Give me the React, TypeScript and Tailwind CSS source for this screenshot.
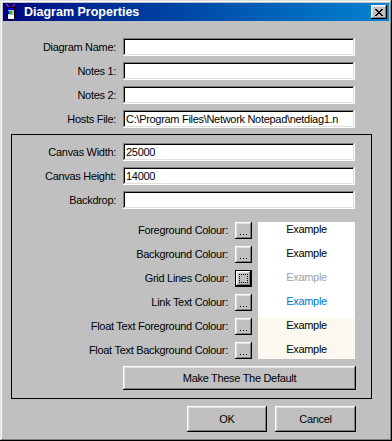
import React from "react";

const raised =
  "bg-[#c0c0c0] shadow-[inset_-1px_-1px_#000000,inset_1px_1px_#ffffff,inset_-2px_-2px_#808080,inset_2px_2px_#dfdfdf]";
const sunken =
  "bg-white shadow-[inset_-1px_-1px_#ffffff,inset_1px_1px_#808080,inset_-2px_-2px_#dfdfdf,inset_2px_2px_#000000]";

function Field({ label, value, labelW }: { label: string; value?: string; labelW: string }) {
  return (
    <div className="flex items-center h-[18px]">
      <div className={`${labelW} text-right leading-[18px] whitespace-nowrap`}>{label}</div>
      <div className={`ml-[7px] w-[232px] h-[18px] ${sunken} pl-[3px] pr-[2px] overflow-hidden whitespace-nowrap leading-[18px]`}>
        {value}
      </div>
    </div>
  );
}

function DotsButton({ focused }: { focused?: boolean }) {
  if (focused) {
    return (
      <div className="w-[17px] h-[17px] border border-black flex">
        <div className={`flex-1 ${raised} flex items-center justify-center`}>
          <div className="w-[9px] h-[9px] border border-dotted border-black" />
        </div>
      </div>
    );
  }
  return (
    <div className={`w-[17px] h-[17px] ${raised} flex items-end justify-center pb-[4px]`}>
      <div className="flex gap-[2px]">
        <div className="w-[1px] h-[1px] bg-black" />
        <div className="w-[1px] h-[1px] bg-black" />
        <div className="w-[1px] h-[1px] bg-black" />
      </div>
    </div>
  );
}

function AppIcon() {
  return (
    <svg width="16" height="18" viewBox="0 0 16 18" shapeRendering="crispEdges">
      <path d="M3 1 L6 4" stroke="#ff00ff" strokeWidth="1" />
      <path d="M12 1 L9 4" stroke="#e02060" strokeWidth="1" />
      <rect x="4.5" y="4.5" width="7" height="12" fill="#c0c0c0" stroke="#000" />
      <rect x="5" y="5" width="6" height="2" fill="#0000ff" />
      <rect x="5" y="8" width="1" height="3" fill="#0000ff" />
      <rect x="6" y="8" width="3" height="3" fill="#00d000" />
      <rect x="5" y="12" width="6" height="4" fill="#ffffff" />
    </svg>
  );
}

export default function App() {
  const colourRows = [
    "Foreground Colour:",
    "Background Colour:",
    "Grid Lines Colour:",
    "Link Text Colour:",
    "Float Text Foreground Colour:",
    "Float Text Background Colour:",
  ];
  const examples = [
    { bg: "bg-white", color: "text-black", h: "h-[24px]" },
    { bg: "bg-white", color: "text-black", h: "h-[24px]" },
    { bg: "bg-white", color: "text-[#a0a0a0]", h: "h-[24px]" },
    { bg: "bg-white", color: "text-[#0078c8]", h: "h-[24px]" },
    { bg: "bg-[#fdf8ef]", color: "text-black", h: "h-[24px]" },
    { bg: "bg-[#fdf8ef]", color: "text-black", h: "h-[17px]" },
  ];
  return (
    <div
      className="w-[392px] h-[441px] bg-[#c0c0c0] p-[3px] flex flex-col text-[11px] tracking-[-0.3px] text-black shadow-[inset_-1px_-1px_#000000,inset_1px_1px_#dfdfdf,inset_-2px_-2px_#808080,inset_2px_2px_#ffffff]"
      style={{ fontFamily: '"Liberation Sans", Arial, sans-serif' }}
    >
      {/* Title bar */}
      <div className="h-[18px] flex items-center bg-gradient-to-r from-[#000080] to-[#1084d0]">
        <div className="ml-[0px] flex items-center">
          <AppIcon />
        </div>
        <div className="ml-[5px] text-white font-bold text-[12.5px] tracking-[0px] leading-[18px]">Diagram Properties</div>
        <div className={`ml-auto mr-[2px] w-[16px] h-[14px] ${raised} flex items-center justify-center`}>
          <svg width="8" height="7" viewBox="0 0 8 7" shapeRendering="crispEdges">
            <path d="M0 0h2v1h-2zM6 0h2v1h-2zM1 1h2v1h-2zM5 1h2v1h-2zM2 2h4v1h-4zM3 3h2v1h-2zM2 4h4v1h-4zM1 5h2v1h-2zM5 5h2v1h-2zM0 6h2v1h-2zM6 6h2v1h-2z" fill="#000" />
          </svg>
        </div>
      </div>

      {/* Top fields */}
      <div className="mt-[17px] flex flex-col gap-[6px]">
        <Field label="Diagram Name:" labelW="w-[113px]" />
        <Field label="Notes 1:" labelW="w-[113px]" />
        <Field label="Notes 2:" labelW="w-[113px]" />
        <Field label="Hosts File:" labelW="w-[113px]" value="C:\Program Files\Network Notepad\netdiag1.n" />
      </div>

      {/* Group box */}
      <div className="mt-[6px] ml-[8px] w-[361px] h-[265px] border border-black flex flex-col pt-[8px]">
        <div className="flex flex-col gap-[6px]">
          <Field label="Canvas Width:" labelW="w-[104px]" value="25000" />
          <Field label="Canvas Height:" labelW="w-[104px]" value="14000" />
          <Field label="Backdrop:" labelW="w-[104px]" />
        </div>

        <div className="mt-[13px] flex">
          <div className="flex flex-col">
            {colourRows.map((label, i) => (
              <div key={label} className={`flex items-start ${i === 5 ? "h-[17px]" : "h-[24px]"}`}>
                <div className="w-[216px] text-right leading-[17px] whitespace-nowrap">{label}</div>
                <div className="ml-[7px]">
                  <DotsButton focused={i === 2} />
                </div>
              </div>
            ))}
          </div>
          <div className="ml-[6px] w-[97px] flex flex-col">
            {examples.map((e, i) => (
              <div key={i} className={`${e.h} ${e.bg} ${e.color} text-center leading-[15px]`}>
                Example
              </div>
            ))}
          </div>
        </div>

        <div className={`mt-[7px] ml-[111px] w-[233px] h-[24px] ${raised} flex items-center justify-center`}>
          Make These The Default
        </div>
      </div>

      {/* Bottom buttons */}
      <div className="mt-[7px] flex ml-[184px] gap-[8px]">
        <div className={`w-[80px] h-[26px] ${raised} flex items-center justify-center`}>OK</div>
        <div className={`w-[81px] h-[26px] ${raised} flex items-center justify-center`}>Cancel</div>
      </div>
    </div>
  );
}
